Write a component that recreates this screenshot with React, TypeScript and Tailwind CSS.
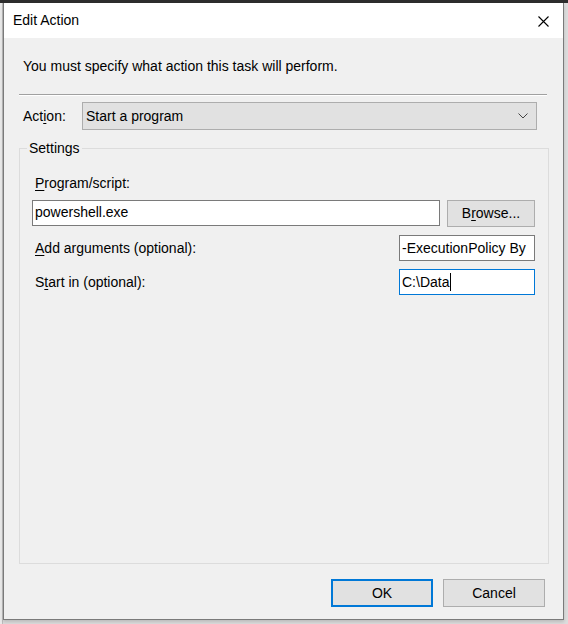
const font = "font-['Segoe_UI','Liberation_Sans',sans-serif]";

const Key: React.FC<{ children: React.ReactNode }> = ({ children }) => (
  <span className="underline underline-offset-[2px] decoration-1">{children}</span>
);

const TextBox: React.FC<{ className?: string; focused?: boolean; children: React.ReactNode }> = ({
  className = "",
  focused,
  children,
}) => (
  <div
    className={`h-[26px] bg-white border flex items-center pl-[2px] overflow-hidden whitespace-nowrap ${
      focused ? "border-[#0078d7]" : "border-[#7a7a7a]"
    } ${className}`}
  >
    {children}
  </div>
);

export default function App() {
  return (
    <div className={`w-[568px] h-[624px] bg-[#dcdcdc] flex flex-col overflow-hidden text-[14px] text-black ${font}`}>
      <div className="h-[3px] bg-[#2d2d2d] shrink-0" />
      <div className="flex flex-1">
        <div className="w-[3px] bg-[#e9e9e9] border-r border-[#bcbcbc] shrink-0" />
        {/* dialog window */}
        <div className="w-[561px] h-[617px] flex flex-col border-x border-b border-[#7a7a7a] bg-[#f0f0f0] shadow-[0_2px_3px_rgba(0,0,0,0.15)]">
          <div className="h-[35px] bg-white flex items-center justify-between pl-[9px] pr-[14px] shrink-0">
            <span>Edit Action</span>
            <svg width="11" height="11" viewBox="0 0 11 11" className="mt-[1px]">
              <path d="M0.5 0.5L10.5 10.5M10.5 0.5L0.5 10.5" stroke="#000" strokeWidth="1.1" />
            </svg>
          </div>

          <div className="flex-1 flex flex-col pl-[15px] pr-[15px]">
            <div className="mt-[18px] pl-[4px] leading-[20px]">You must specify what action this task will perform.</div>

            <div className="mt-[18px] h-[2px] border-t border-[#a0a0a0] border-b border-b-white mr-[1px]" />

            <div className="mt-[6px] flex items-center">
              <span className="w-[63px] pl-[4px]">
                Act<Key>i</Key>on:
              </span>
              <div className="w-[455px] h-[28px] bg-[#e1e1e1] border border-[#adadad] flex items-center justify-between pl-[3px] pr-[8px]">
                <span>Start a program</span>
                <svg width="10" height="6" viewBox="0 0 10 6">
                  <path d="M0.5 0.5L5 5L9.5 0.5" stroke="#444" fill="none" strokeWidth="1" />
                </svg>
              </div>
            </div>

            <fieldset className="mt-[9px] h-[425px] w-[530px] border border-[#dcdcdc] pl-[12px] pr-[13px]">
              <legend className="ml-[-5px] px-[2px] leading-[18px]">Settings</legend>

              <div className="mt-[16px] pl-[3px] leading-[20px]">
                <Key>P</Key>rogram/script:
              </div>
              <div className="mt-[5px] flex items-center justify-between">
                <TextBox className="w-[408px]">powershell.exe</TextBox>
                <button className="w-[88px] h-[27px] mt-[2px] bg-[#e1e1e1] border border-[#adadad]">
                  B<Key>r</Key>owse...
                </button>
              </div>

              <div className="mt-[8px] flex items-center justify-between">
                <span className="pl-[3px]">
                  <Key>A</Key>dd arguments (optional):
                </span>
                <TextBox className="w-[136px]">-ExecutionPolicy By</TextBox>
              </div>

              <div className="mt-[8px] flex items-center justify-between">
                <span className="pl-[3px]">
                  S<Key>t</Key>art in (optional):
                </span>
                <TextBox className="w-[136px]" focused>
                  C:\Data
                  <span className="w-px h-[18px] bg-black ml-[1px]" />
                </TextBox>
              </div>
            </fieldset>

            <div className="mt-[15px] flex justify-end gap-[10px] pr-[3px]">
              <button className="w-[102px] h-[28px] bg-[#e1e1e1] border-2 border-[#0078d7]">OK</button>
              <button className="w-[102px] h-[28px] bg-[#e1e1e1] border border-[#adadad]">Cancel</button>
            </div>
          </div>
        </div>
      </div>
    </div>
  );
}
